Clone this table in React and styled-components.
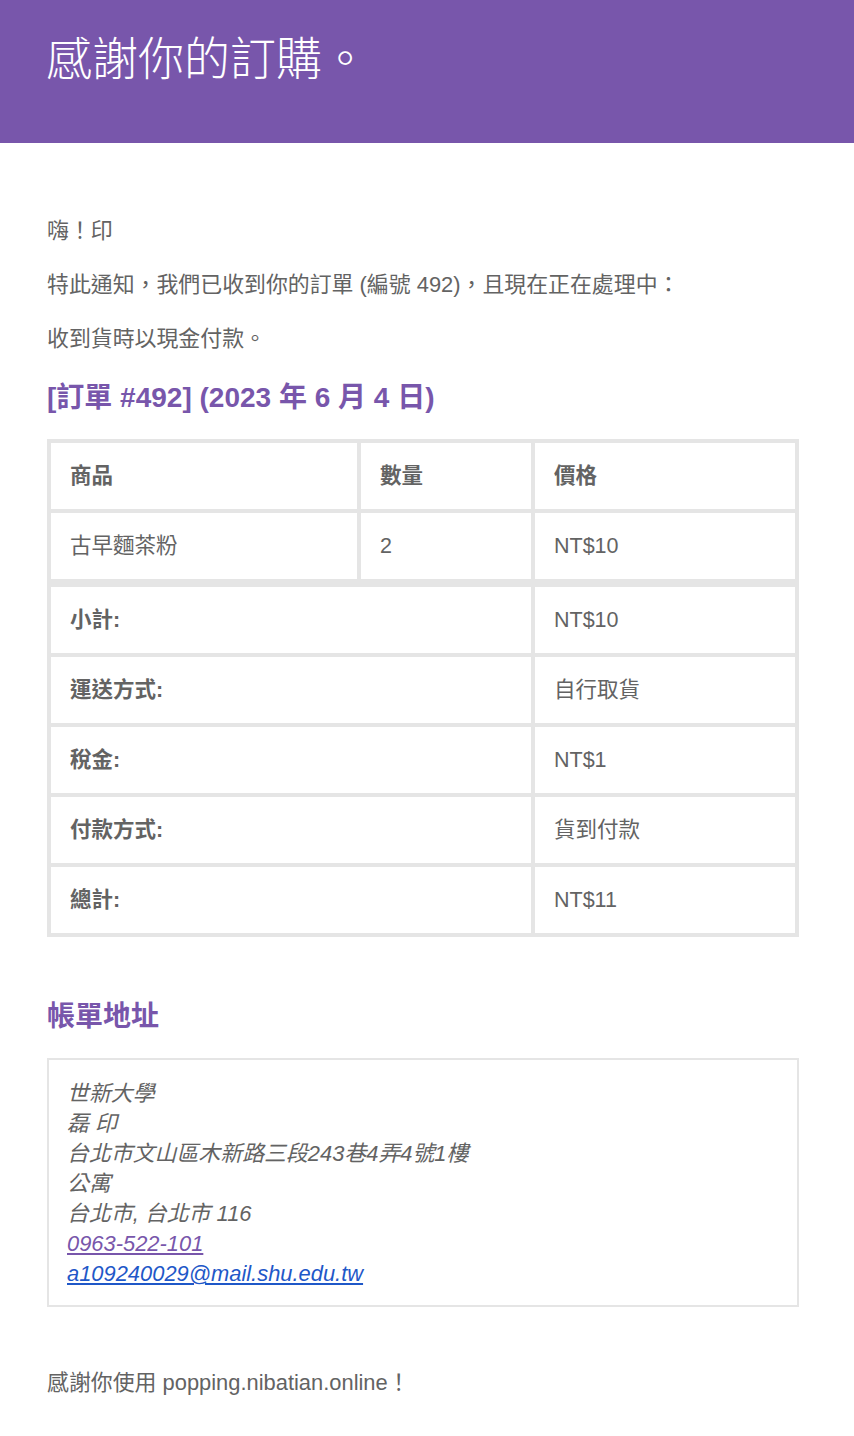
import React from "react";
import styled, { createGlobalStyle } from "styled-components";

const purple = "#7856ab";
const text = "#636363";
const line = "#e5e5e5";

const GlobalStyle = createGlobalStyle`
  body {
    margin: 0;
    background: #ffffff;
    font-family: "Liberation Sans", "Noto Sans CJK TC", sans-serif;
    color: ${text};
  }
`;

const Header = styled.div`
  background: ${purple};
  padding: 25px 46px 49px;
`;

const Title = styled.h1`
  margin: 0;
  color: #ffffff;
  font-size: 46px;
  line-height: 69px;
  font-weight: 300;
`;

const Content = styled.div`
  padding: 72px 55px 37px 47px;
`;

const Para = styled.p`
  margin: 0 0 22px;
  font-size: 21.9px;
  line-height: 32px;
`;

const Heading = styled.h2`
  margin: ${(p) => p.$top}px 0 ${(p) => p.$bottom}px;
  color: ${purple};
  font-size: 28px;
  line-height: 36px;
  font-weight: 700;
`;

const OrderTable = styled.div`
  display: grid;
  grid-template-columns: 310px 174px 264px;
  border: 2px solid ${line};
  width: 752px;
  box-sizing: border-box;
`;

const Cell = styled.div`
  box-sizing: border-box;
  border: 2px solid ${line};
  border-top-width: ${(p) => (p.$first ? 6 : 2)}px;
  padding: 18px 19px;
  font-size: 21.5px;
  line-height: 30px;
  font-weight: ${(p) => (p.$bold ? 700 : 400)};
  grid-column: ${(p) => (p.$wide ? "span 2" : "auto")};
`;

const Address = styled.address`
  box-sizing: border-box;
  width: 752px;
  border: 2px solid ${line};
  padding: 19px 18px 16px;
  font-style: italic;
  font-size: 21.9px;
  line-height: 30px;
`;

const Phone = styled.a`
  color: ${purple};
  text-decoration: underline;
`;

const Mail = styled.a`
  color: #1f58c8;
  text-decoration: underline;
`;

const Footer = styled.p`
  margin: 60px 0 0;
  font-size: 21.9px;
  line-height: 32px;
`;

const totals = [
  ["小計:", "NT$10"],
  ["運送方式:", "自行取貨"],
  ["稅金:", "NT$1"],
  ["付款方式:", "貨到付款"],
  ["總計:", "NT$11"],
];

export default function App() {
  return (
    <>
      <GlobalStyle />
      <Header>
        <Title>感謝你的訂購。</Title>
      </Header>
      <Content>
        <Para>嗨！印</Para>
        <Para>特此通知，我們已收到你的訂單 (編號 492)，且現在正在處理中：</Para>
        <Para>收到貨時以現金付款。</Para>

        <Heading $top={25} $bottom={23}>
          [訂單 #492] (2023 年 6 月 4 日)
        </Heading>
        <OrderTable>
          <Cell $bold>商品</Cell>
          <Cell $bold>數量</Cell>
          <Cell $bold>價格</Cell>
          <Cell>古早麵茶粉</Cell>
          <Cell>2</Cell>
          <Cell>NT$10</Cell>
          {totals.map(([label, value], i) => (
            <React.Fragment key={label}>
              <Cell $bold $wide $first={i === 0}>
                {label}
              </Cell>
              <Cell $first={i === 0}>{value}</Cell>
            </React.Fragment>
          ))}
        </OrderTable>

        <Heading $top={62} $bottom={23}>
          帳單地址
        </Heading>
        <Address>
          世新大學
          <br />
          磊 印
          <br />
          台北市文山區木新路三段243巷4弄4號1樓
          <br />
          公寓
          <br />
          台北市, 台北市 116
          <br />
          <Phone href="#">0963-522-101</Phone>
          <br />
          <Mail href="#">a109240029@mail.shu.edu.tw</Mail>
        </Address>

        <Footer>感謝你使用 popping.nibatian.online！</Footer>
      </Content>
    </>
  );
}
